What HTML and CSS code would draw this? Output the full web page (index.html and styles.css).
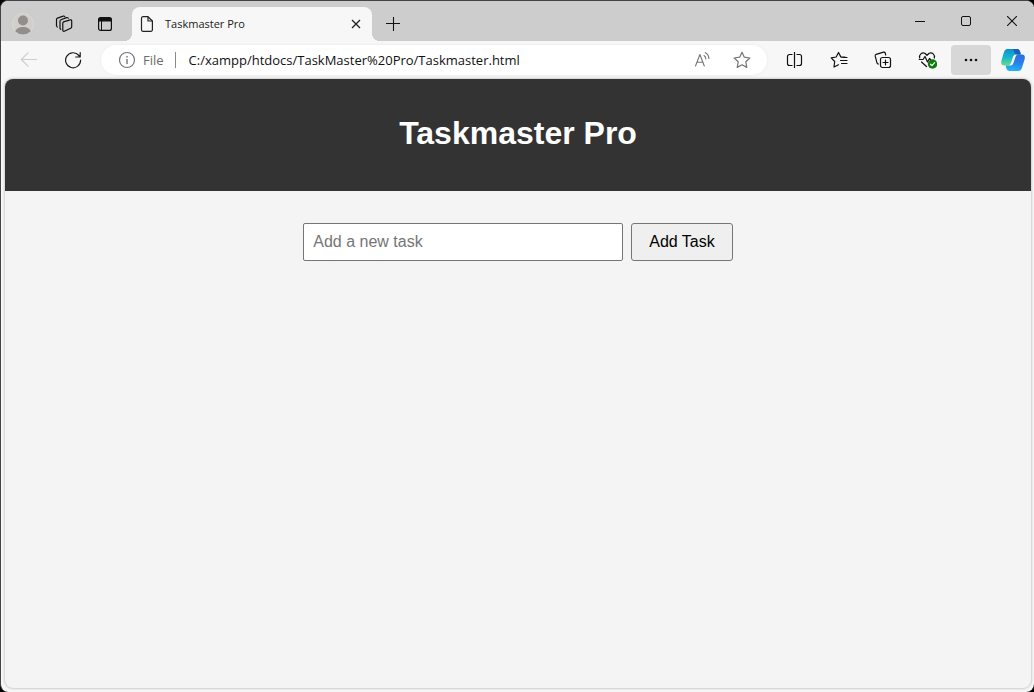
FILE: index.html
```html
<!DOCTYPE html>
<html lang="en">
<head>
<meta charset="utf-8">
<meta name="viewport" content="width=device-width, initial-scale=1">
<title>Taskmaster Pro</title>
<link rel="stylesheet" href="styles.css">
</head>
<body>
<div class="window">
  <div class="tab-strip">
    <div class="strip-tools">
      <button class="strip-button" aria-label="Profile">
        <svg width="22" height="22" viewBox="0 0 22 22"><defs><clipPath id="face"><circle cx="11" cy="11" r="10.5"/></clipPath></defs><circle cx="11" cy="11" r="10.5" fill="#d1cfcb" stroke="#dad8d4"/><g clip-path="url(#face)" fill="#918e8b"><circle cx="11" cy="7.500" r="5"/><path d="M2.500 22c0-5.500 3.500-8 8.500-8s8.500 2.500 8.500 8z"/></g></svg>
      </button>
      <button class="strip-button" aria-label="Workspaces">
        <svg width="18" height="18" viewBox="0 0 18 18" fill="none" stroke="#111" stroke-width="1.200" stroke-linejoin="round" stroke-linecap="round"><path d="M8.500 6.800 15.300 4.800Q16.700 4.600 16.700 6V11.800Q16.700 12.800 15.700 13.200L9.300 16.200Q7.800 16.600 7.800 15V8Q7.800 7.100 8.500 6.800z"/><path d="M5.800 14.300 5 13.500V6.300Q5 5.200 6 4.800L11.500 2.600Q12.700 2.200 13.300 3.200"/><path d="M2.300 12 1.500 11V4.600Q1.500 3.500 2.500 3.100L8.200 1.100Q9.300.800 9.800 1.600"/></svg>
      </button>
      <button class="strip-button" aria-label="Tab actions menu">
        <svg width="16" height="16" viewBox="0 0 16 16"><rect x="1.600" y="1.600" width="12.800" height="12.800" rx="2" fill="none" stroke="#111" stroke-width="1.200"/><path d="M1.500 5.500V3.500a2 2 0 0 1 2-2h9a2 2 0 0 1 2 2v2z" fill="#111"/><path d="M4.500 5v9.500" stroke="#111"/></svg>
      </button>
    </div>
    <div class="tab">
      <svg width="14" height="16" viewBox="0 0 14 16" fill="none" stroke="#222" stroke-width="1.200" stroke-linejoin="round"><path d="M3 .700h5L12.400 5v8.800a1.500 1.500 0 0 1-1.500 1.500H3a1.500 1.500 0 0 1-1.500-1.500V2.200A1.500 1.500 0 0 1 3 .700z"/><path d="M8 .700V5h4.400"/></svg>
      <span class="tab-title">Taskmaster Pro</span>
      <button class="tab-close" aria-label="Close tab"><svg width="10" height="10" viewBox="0 0 10 10"><path d="M1 1l8 8M9 1L1 9" stroke="#222" stroke-width="1.300"/></svg></button>
    </div>
    <button class="new-tab" aria-label="New tab"><svg width="14" height="14" viewBox="0 0 14 14"><path d="M7.500 0v14M0 6.500h14" stroke="#111" stroke-width="1.100"/></svg></button>
    <div class="window-controls">
      <button class="window-button" aria-label="Minimize"><svg width="10" height="10" viewBox="0 0 10 10"><path d="M0 5.500h10" stroke="#111"/></svg></button>
      <button class="window-button" aria-label="Maximize"><svg width="10" height="10" viewBox="0 0 10 10"><rect x=".500" y=".500" width="9" height="9" rx="1.500" fill="none" stroke="#111"/></svg></button>
      <button class="window-button" aria-label="Close window"><svg width="10" height="10" viewBox="0 0 10 10"><path d="M0 0l10 10M10 0L0 10" stroke="#111" stroke-width="1.100"/></svg></button>
    </div>
  </div>

  <div class="toolbar">
    <button class="tool" aria-label="Back" disabled><svg width="18" height="16" viewBox="0 0 18 16" fill="none" stroke="#cecece" stroke-width="1.200" stroke-linecap="round" stroke-linejoin="round"><path d="M16.500 7.500H1.500M8 .800 1.300 7.500 8 14.200"/></svg></button>
    <button class="tool" aria-label="Refresh"><svg width="18" height="18" viewBox="0 0 18 18" fill="none" stroke="#1a1a1a" stroke-width="1.200" stroke-linecap="round" stroke-linejoin="round"><path d="M16.600 9A7.500 7.500 0 1 1 14.900 4.500L16 5.800M16.200 1.500V6H11.700"/></svg></button>
    <div class="address">
      <svg width="18" height="18" viewBox="0 0 18 18" fill="none" stroke="#757575" stroke-width="1.200"><circle cx="9" cy="9" r="7.500"/><path d="M9 8v5M9 5v1.500" stroke-width="1.400"/></svg>
      <span class="scheme">File</span>
      <span class="divider"></span>
      <input class="url" type="text" aria-label="Address" value="C:/xampp/htdocs/TaskMaster%20Pro/Taskmaster.html">
      <button class="address-button" aria-label="Read aloud"><svg width="18" height="18" viewBox="0 0 18 18" fill="none" stroke="#757575" stroke-width="1.100" stroke-linecap="round" stroke-linejoin="round"><path d="M2.500 15 6.900 3.500 11.300 15M3.900 11.300h6M11 4.500Q12.800 5.500 12.800 8M12.300 1.700Q16 3.800 15.800 7.500"/></svg></button>
      <button class="address-button" aria-label="Add to favorites"><svg width="18" height="18" viewBox="0 0 18 18" fill="none" stroke="#757575" stroke-width="1.200" stroke-linejoin="round"><path d="M9 1.300 11.300 6.200 16.800 7 12.800 10.800 13.800 16.400 9 13.800 4.200 16.400 5.200 10.800 1.200 7 6.700 6.200z"/></svg></button>
    </div>
    <div class="tools">
      <button class="tool" aria-label="Split screen"><svg width="18" height="16" viewBox="0 0 18 16" fill="none" stroke="#111" stroke-width="1.200"><path d="M6.500 2.500h-3a2 2 0 0 0-2 2v7a2 2 0 0 0 2 2h3M10.500 2.500h3a2 2 0 0 1 2 2v7a2 2 0 0 1-2 2h-3M8.500 0v16"/></svg></button>
      <button class="tool" aria-label="Favorites"><svg width="18" height="18" viewBox="0 0 18 18" fill="none" stroke="#111" stroke-width="1.200" stroke-linejoin="round" stroke-linecap="round"><path d="M15 6.200 10.800 5.900 8.500 1.500 6.200 6 1.200 6.800 4.700 10.500 4 16 8.500 13.800M11.500 6.500h5.500M10.500 9.500h6.500M11.500 12.500h5.500"/></svg></button>
      <button class="tool" aria-label="Collections"><svg width="18" height="18" viewBox="0 0 18 18" fill="none" stroke="#111" stroke-width="1.200" stroke-linecap="round"><rect x="6.500" y="6.500" width="10" height="10" rx="2"/><path d="M11.500 9v5M9 11.500h5M4.500 13Q3.300 13.100 3 11.900L1.200 5.200Q.900 3.800 2.200 3.300L9.500 1.200Q10.900 1 11.300 2.200L11.700 4"/></svg></button>
      <button class="tool" aria-label="Browser essentials"><svg width="20" height="18" viewBox="0 0 20 18" fill="none" stroke="#111" stroke-width="1.200" stroke-linecap="round" stroke-linejoin="round"><path d="M2.700 7C1.800 3.500 5 1 7.800 2.200L10 4.300 12.200 2.200C15.200 1 18.200 3.500 17.300 7M2.200 8.500H6L8 5.500 10.500 11 12.500 7.500 13.500 8.500M4.500 11 9.500 15.500"/><circle cx="15.500" cy="13" r="4.700" fill="#107c10" stroke="none"/><path d="M13.500 13.200 15 14.600 17.600 11.700" stroke="#fff"/></svg></button>
      <button class="tool tool-active" aria-label="Settings and more"><svg width="14" height="4" viewBox="0 0 14 4" fill="#111"><circle cx="2" cy="2" r="1.300"/><circle cx="7" cy="2" r="1.300"/><circle cx="12" cy="2" r="1.300"/></svg></button>
    </div>
    <button class="copilot" aria-label="Copilot"><svg width="24" height="24" viewBox="0 0 24 24"><defs><linearGradient id="left" x1=".3" y1="0" x2=".3" y2="1"><stop offset="0" stop-color="#0b8fd0"/><stop offset=".5" stop-color="#16b5cf"/><stop offset="1" stop-color="#66df87"/></linearGradient><linearGradient id="right" x1=".7" y1="0" x2=".5" y2="1"><stop offset="0" stop-color="#2b6fe0"/><stop offset=".5" stop-color="#2c7eeb"/><stop offset="1" stop-color="#1db5f2"/></linearGradient></defs><path d="M6.500 1H16Q18.300 1 19 3.200L19.800 6.500H15Q12.700 6.500 12 8.800L10 15Q9.200 17.500 6.800 17.500H3Q-.5 17.500.3 13L3 4Q4 1 6.500 1z" fill="url(#left)"/><path d="M12 1H16Q18.300 1 19 3.200L19.800 6.500H16Q13.800 6.500 13.300 4z" fill="#1a5fb8"/><path d="M17.500 6.500H21Q24.500 6.500 23.700 11L20.900 20Q19.900 23 17.300 23H8.500Q6.200 23 5.500 20.800L4.600 17.500H9.500Q11.600 17.500 12.300 15.200L14.500 8.800Q15.200 6.500 17.500 6.500z" fill="url(#right)"/></svg></button>
  </div>

  <div class="page">
    <header class="page-header"><h1 class="page-title">Taskmaster Pro</h1></header>
    <main class="page-main">
      <form class="task-form">
        <input class="task-input" type="text" placeholder="Add a new task" aria-label="Add a new task">
        <button class="task-add" type="button">Add Task</button>
      </form>
    </main>
  </div>
</div>
</body>
</html>
```

FILE: styles.css
```css
* {
  box-sizing: border-box;
}

body {
  margin: 0;
  background: #000;
  font-family: "Open Sans", "Noto Sans", sans-serif;
}

button {
  display: flex;
  align-items: center;
  justify-content: center;
  flex: none;
  margin: 0;
  padding: 0;
  border: 0;
  background: none;
}

svg {
  display: block;
  flex: none;
}

.window {
  display: flex;
  flex-direction: column;
  min-height: 100vh;
  overflow: hidden;
  border: solid #454345;
  border-width: 1px 0 0 1px;
  border-radius: 8px;
  background: #f7f7f7;
}

.tab-strip {
  display: flex;
  height: 40px;
  background: #cdcdcd;
}

.strip-tools {
  display: flex;
  align-items: center;
  padding: 6px 7px 0 1px;
}

.strip-button {
  width: 41px;
  height: 32px;
}

.tab {
  position: relative;
  display: flex;
  align-items: center;
  flex: 0 1 240px;
  margin-top: 6px;
  padding: 0 10px 0 8px;
  gap: 11px;
  border-radius: 8px 8px 0 0;
  background: #f7f7f7;
}

.tab::before,
.tab::after {
  content: "";
  position: absolute;
  bottom: 0;
  width: 8px;
  height: 8px;
}

.tab::before {
  right: 100%;
  background: radial-gradient(circle at 0 0, #cdcdcd 8px, #f7f7f7 8px);
}

.tab::after {
  left: 100%;
  background: radial-gradient(circle at 100% 0, #cdcdcd 8px, #f7f7f7 8px);
}

.tab-title {
  flex: 1;
  padding-bottom: 2px;
  color: #1a1a1a;
  font-size: 11px;
}

.tab-close {
  width: 12px;
  height: 20px;
}

.new-tab {
  width: 30px;
  margin: 6px 0 0 6px;
}

.window-controls {
  display: flex;
  margin: 0 -1px 0 auto;
}

.window-button {
  width: 46px;
}

.toolbar {
  display: flex;
  align-items: center;
  height: 38px;
  padding: 0 3px 0 8px;
  gap: 4px;
}

.tool {
  width: 40px;
  height: 30px;
  border-radius: 4px;
}

.tool-active {
  background: #d7d7d7;
}

.address {
  display: flex;
  align-items: center;
  flex: 1;
  min-width: 0;
  height: 30px;
  margin: 0 4px;
  padding: 0 9px 0 17px;
  border-radius: 15px;
  background: #fff;
  box-shadow: 0 0 3px #00000012;
}

.scheme {
  margin-left: 7px;
  color: #6b6b6b;
  font-size: 13px;
}

.divider {
  width: 1px;
  height: 16px;
  margin: 0 13px 0 11px;
  background: #8a8a8a;
}

.url {
  flex: 1;
  min-width: 0;
  padding: 0;
  border: 0;
  outline: 0;
  background: none;
  color: #111;
  font: 13px "Open Sans", "Noto Sans", sans-serif;
}

.address-button {
  width: 32px;
  height: 28px;
  margin-left: 8px;
}

.tools {
  display: flex;
  gap: 4px;
}

.copilot {
  width: 36px;
  height: 30px;
}

.page {
  flex: 1;
  margin: 0 3px 4px 4px;
  overflow: hidden;
  border-radius: 8px;
  background: #f4f4f4;
  box-shadow: 0 0 3px #00000059;
  font-family: "Liberation Sans", Arial, sans-serif;
}

.page-header {
  padding: 16px;
  background: #333;
  color: #fff;
  text-align: center;
}

.page-title {
  margin: 20px 0 24px;
  font-size: 32px;
  line-height: 36px;
}

.page-main {
  padding: 32px;
}

.task-form {
  display: flex;
  justify-content: center;
  gap: 8px;
}

.task-input {
  flex: 0 1 320px;
  min-width: 0;
  padding: 9px;
  border: 1px solid #767676;
  border-radius: 2px;
  background: #fff;
  font: 16px/18px "Liberation Sans", Arial, sans-serif;
}

.task-input::placeholder {
  color: #757575;
}

.task-add {
  padding: 9px 17px;
  border: 1px solid #767676;
  border-radius: 3px;
  background: #efefef;
  color: #000;
  font: 16px/18px "Liberation Sans", Arial, sans-serif;
}
```
